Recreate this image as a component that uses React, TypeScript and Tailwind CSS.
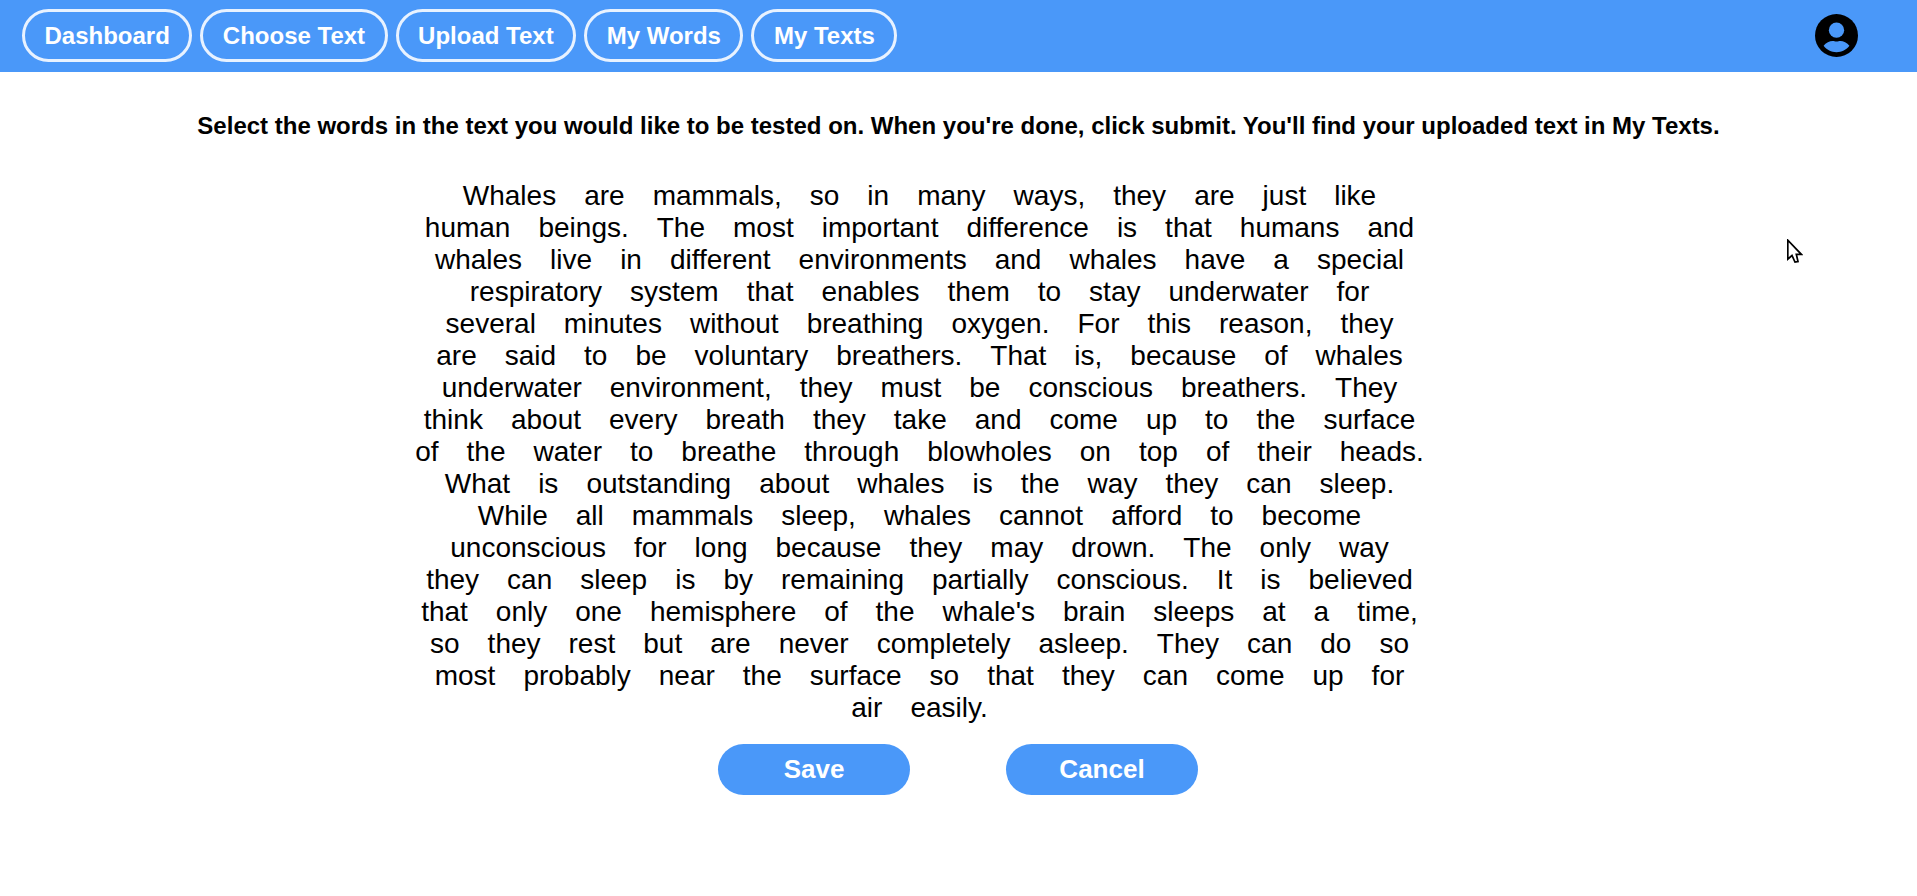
const navItems = ['Dashboard', 'Choose Text', 'Upload Text', 'My Words', 'My Texts'];

const lines = [
  'Whales are mammals, so in many ways, they are just like',
  'human beings. The most important difference is that humans and',
  'whales live in different environments and whales have a special',
  'respiratory system that enables them to stay underwater for',
  'several minutes without breathing oxygen. For this reason, they',
  'are said to be voluntary breathers. That is, because of whales',
  'underwater environment, they must be conscious breathers. They',
  'think about every breath they take and come up to the surface',
  'of the water to breathe through blowholes on top of their heads.',
  'What is outstanding about whales is the way they can sleep.',
  'While all mammals sleep, whales cannot afford to become',
  'unconscious for long because they may drown. The only way',
  'they can sleep is by remaining partially conscious. It is believed',
  "that only one hemisphere of the whale's brain sleeps at a time,",
  'so they rest but are never completely asleep. They can do so',
  'most probably near the surface so that they can come up for',
  'air easily.',
];

function NavBar() {
  return (
    <header className="flex h-[72px] items-start justify-between bg-[#4a98f9] pt-[9px] pr-[59.5px] pl-[22px]">
      <nav className="flex gap-2">
        {navItems.map((item) => (
          <button
            key={item}
            className="flex h-[53px] items-center rounded-[27px] border-3 border-[#e8f2ff] px-[19.5px] text-2xl font-bold whitespace-nowrap text-white"
          >
            {item}
          </button>
        ))}
      </nav>
      <svg viewBox="2 2 20 20" className="mt-[5px] h-[43px] w-[43px]" aria-label="Account">
        <circle cx="12" cy="12" r="10" fill="black" />
        <circle cx="12" cy="9.500" r="3.550" fill="#4a98f9" />
        <path
          d="M6 16.800C7 15.300 8.900 14.500 10.200 14.500c.6 0 1.100.250 1.800.250s1.200-.250 1.800-.250c1.300 0 3.200.8 4.200 2.300-1.400 1.900-3.600 3-6 3s-4.600-1.100-6-3z"
          fill="#4a98f9"
        />
      </svg>
    </header>
  );
}

function Pointer() {
  return (
    <svg viewBox="0 0 16 25" className="absolute top-[239px] left-[1787px] h-[25px] w-4">
      <path d="M.8 1.200V20.200L5 16.500 8 23l3-.500-1.700-7.200h5z" fill="white" stroke="black" strokeWidth="1.700" />
    </svg>
  );
}

export default function App() {
  return (
    <div className="relative h-[896px] overflow-hidden bg-white font-['Liberation_Sans',Arial,sans-serif] text-black">
      <NavBar />
      <h1 className="mt-10 text-center text-2xl leading-7 font-bold whitespace-nowrap">
        Select the words in the text you would like to be tested on. When you're done, click submit. You'll find your
        uploaded text in My Texts.
      </h1>
      <main className="mt-10 w-[1839px] text-[28px] leading-8">
        {lines.map((line) => (
          <p key={line} className="flex justify-center gap-x-[28px] whitespace-nowrap">
            {line.split(' ').map((word, i) => (
              <span key={i}>{word}</span>
            ))}
          </p>
        ))}
      </main>
      <div className="mt-5 flex justify-center gap-24 pr-px">
        {['Save', 'Cancel'].map((label) => (
          <button key={label} className="h-[51px] w-48 rounded-full bg-[#4a98f9] text-[26px] font-bold text-white">
            {label}
          </button>
        ))}
      </div>
      <Pointer />
    </div>
  );
}
